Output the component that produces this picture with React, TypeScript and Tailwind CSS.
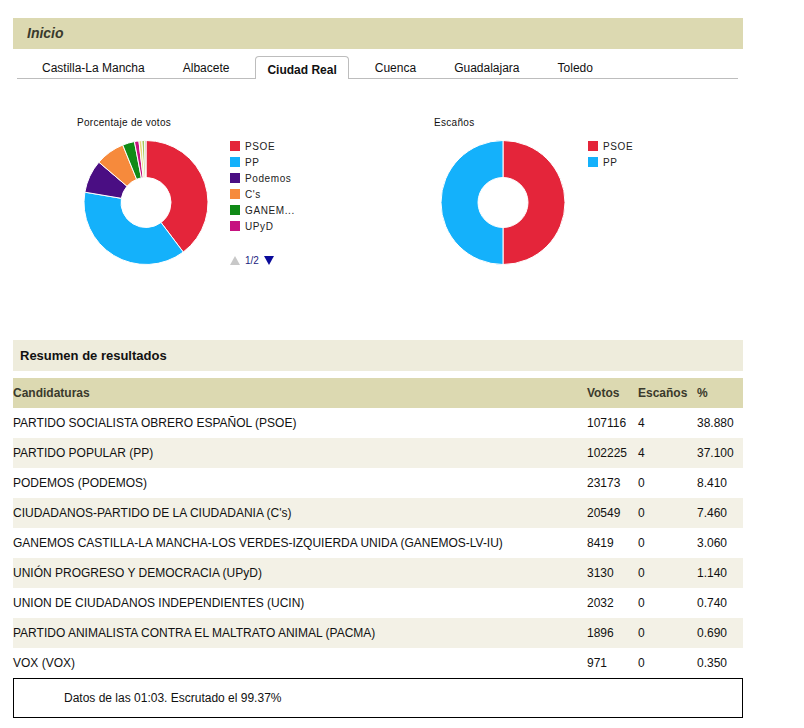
import React from 'react';

const font = { fontFamily: '"Liberation Sans", Arial, sans-serif' };

type Slice = { label: string; value: number; color: string };

const votos: Slice[] = [
    { label: 'PSOE', value: 38.88, color: '#e4253a' },
    { label: 'PP', value: 37.1, color: '#14b1fb' },
    { label: 'Podemos', value: 8.41, color: '#4a0e83' },
    { label: "C's", value: 7.46, color: '#f68a3c' },
    { label: 'GANEM...', value: 3.06, color: '#108a16' },
    { label: 'UPyD', value: 1.14, color: '#c6127f' },
    { label: 'UCIN', value: 0.74, color: '#e9d77a' },
    { label: 'PACMA', value: 0.69, color: '#a6c95a' },
    { label: 'VOX', value: 0.35, color: '#b9a88a' },
];

const escanos: Slice[] = [
    { label: 'PSOE', value: 4, color: '#e4253a' },
    { label: 'PP', value: 4, color: '#14b1fb' },
];

const rows = [
    ['PARTIDO SOCIALISTA OBRERO ESPAÑOL (PSOE)', '107116', '4', '38.880'],
    ['PARTIDO POPULAR (PP)', '102225', '4', '37.100'],
    ['PODEMOS (PODEMOS)', '23173', '0', '8.410'],
    ["CIUDADANOS-PARTIDO DE LA CIUDADANIA (C's)", '20549', '0', '7.460'],
    ['GANEMOS CASTILLA-LA MANCHA-LOS VERDES-IZQUIERDA UNIDA (GANEMOS-LV-IU)', '8419', '0', '3.060'],
    ['UNIÓN PROGRESO Y DEMOCRACIA (UPyD)', '3130', '0', '1.140'],
    ['UNION DE CIUDADANOS INDEPENDIENTES (UCIN)', '2032', '0', '0.740'],
    ['PARTIDO ANIMALISTA CONTRA EL MALTRATO ANIMAL (PACMA)', '1896', '0', '0.690'],
    ['VOX (VOX)', '971', '0', '0.350'],
];

const tabs = ['Castilla-La Mancha', 'Albacete', 'Ciudad Real', 'Cuenca', 'Guadalajara', 'Toledo'];

function Donut({ data }: { data: Slice[] }) {
    const cx = 69, cy = 62.5, r = 62, ir = 25;
    const total = data.reduce((s, d) => s + d.value, 0);
    let a = 0;
    const pt = (ang: number, rad: number) => [cx + rad * Math.sin(ang), cy - rad * Math.cos(ang)];
    return (
        <svg width="140" height="126" viewBox="0 0 140 126">
            {data.map((d, i) => {
                const a0 = a;
                const a1 = a + (d.value / total) * Math.PI * 2;
                a = a1;
                const large = a1 - a0 > Math.PI ? 1 : 0;
                const [x0, y0] = pt(a0, r);
                const [x1, y1] = pt(a1, r);
                const [x2, y2] = pt(a1, ir);
                const [x3, y3] = pt(a0, ir);
                const dd = `M${x0} ${y0} A${r} ${r} 0 ${large} 1 ${x1} ${y1} L${x2} ${y2} A${ir} ${ir} 0 ${large} 0 ${x3} ${y3} Z`;
                return <path key={i} d={dd} fill={d.color} stroke="#fff" strokeWidth="1" />;
            })}
        </svg>
    );
}

function Legend({ data }: { data: Slice[] }) {
    return (
        <div className="flex flex-col">
            {data.map((d) => (
                <div key={d.label} className="flex items-center h-[16px] text-[10px] tracking-[0.6px] text-[#222]">
                    <span className="w-[10px] h-[10px] mr-[5px]" style={{ backgroundColor: d.color }} />
                    {d.label}
                </div>
            ))}
        </div>
    );
}

export default function App() {
    return (
        <div className="bg-white min-h-[728px] w-[804px]" style={font}>
            <div className="ml-[13px] w-[730px] pt-[18px]">
                <div className="h-[31px] bg-[#dcd9b1] flex items-center pl-[14px] text-[14px] font-bold italic text-[#3a3a2c]">
                    Inicio
                </div>

                <div className="mt-[8px] ml-[4px] w-[721px] h-[22px] border-b border-[#bdbdbd] flex items-end pl-[6px] text-[12px] text-[#111]">
                    {tabs.map((t) =>
                        t === 'Ciudad Real' ? (
                            <div key={t} className="mx-[7px] px-[11px] h-[23px] -mb-px flex items-center font-bold border border-b-0 border-[#bdbdbd] rounded-t-[4px] bg-white pt-[3px]">
                                {t}
                            </div>
                        ) : (
                            <div key={t} className="px-[19px] h-[22px] flex items-center pt-[2px]">
                                {t}
                            </div>
                        )
                    )}
                </div>

                <div className="h-[261px] pt-[38px] flex">
                    <div className="ml-[64px] w-[357px]">
                        <div className="text-[10px] leading-[12px] text-[#111] tracking-[0.3px]">Porcentaje de votos</div>
                        <div className="flex mt-[11px]">
                            <Donut data={votos} />
                            <div className="ml-[13px] -mt-[2px]">
                                <Legend data={votos.slice(0, 6)} />
                                <div className="flex items-center mt-[18px] h-[16px] text-[10px] text-[#1a237e]">
                                    <svg width="10" height="9" viewBox="0 0 10 9" className="mr-[5px]">
                                        <polygon points="5,0 10,9 0,9" fill="#c8c8c8" />
                                    </svg>
                                    <span>1/2</span>
                                    <svg width="10" height="9" viewBox="0 0 10 9" className="ml-[5px]">
                                        <polygon points="0,0 10,0 5,9" fill="#0a0a9a" />
                                    </svg>
                                </div>
                            </div>
                        </div>
                    </div>
                    <div>
                        <div className="text-[10px] leading-[12px] text-[#111] tracking-[0.3px]">Escaños</div>
                        <div className="flex mt-[11px]">
                            <Donut data={escanos} />
                            <div className="ml-[14px] -mt-[2px]">
                                <Legend data={escanos} />
                            </div>
                        </div>
                    </div>
                </div>

                <div className="h-[31px] bg-[#eeecdc] flex items-center pl-[7px] text-[13px] font-bold text-[#111]">
                    Resumen de resultados
                </div>

                <div className="mt-[7px] grid grid-cols-[574px_51px_59px_46px] h-[30px] bg-[#dcd9b1] items-center text-[12px] font-bold text-[#3a3a2c]">
                    <div>Candidaturas</div>
                    <div>Votos</div>
                    <div>Escaños</div>
                    <div>%</div>
                </div>

                {rows.map((r, i) => (
                    <div
                        key={r[0]}
                        className={`grid grid-cols-[574px_51px_59px_46px] h-[30px] items-center text-[12px] text-[#111] ${i % 2 === 1 ? 'bg-[#f3f1e6]' : 'bg-white'}`}
                    >
                        <div>{r[0]}</div>
                        <div>{r[1]}</div>
                        <div>{r[2]}</div>
                        <div>{r[3]}</div>
                    </div>
                ))}

                <div className="h-[40px] border border-black flex items-center pl-[50px] text-[12px] text-[#111]">
                    Datos de las 01:03. Escrutado el 99.37%
                </div>
            </div>
        </div>
    );
}
